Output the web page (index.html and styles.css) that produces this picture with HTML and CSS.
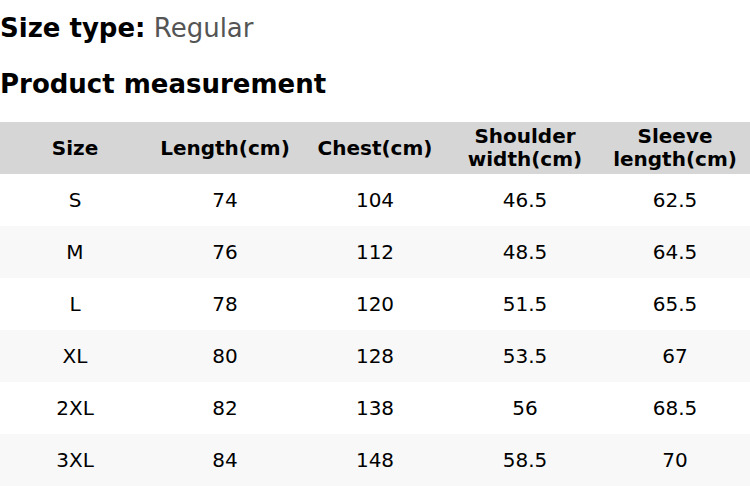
FILE: index.html
```html
<!DOCTYPE html>
<html>
<head>
<meta charset="utf-8">
<link rel="stylesheet" href="styles.css">
</head>
<body>
<div class="page">
  <p class="size-type"><span class="label">Size type:</span> <span class="value">Regular</span></p>
  <h2 class="section-title">Product measurement</h2>
  <table class="measure">
    <thead>
      <tr><th>Size</th><th>Length(cm)</th><th>Chest(cm)</th><th>Shoulder<br>width(cm)</th><th>Sleeve<br>length(cm)</th></tr>
    </thead>
    <tbody>
      <tr><td>S</td><td>74</td><td>104</td><td>46.5</td><td>62.5</td></tr>
      <tr><td>M</td><td>76</td><td>112</td><td>48.5</td><td>64.5</td></tr>
      <tr><td>L</td><td>78</td><td>120</td><td>51.5</td><td>65.5</td></tr>
      <tr><td>XL</td><td>80</td><td>128</td><td>53.5</td><td>67</td></tr>
      <tr><td>2XL</td><td>82</td><td>138</td><td>56</td><td>68.5</td></tr>
      <tr><td>3XL</td><td>84</td><td>148</td><td>58.5</td><td>70</td></tr>
    </tbody>
  </table>
</div>
</body>
</html>
```

FILE: styles.css
```css
html, body {
  margin: 0;
  padding: 0;
  background: #fff;
}
.page {
  font-family: "DejaVu Sans", sans-serif;
  color: #000;
  width: 750px;
}
.size-type {
  margin: 13px 0 0;
  font-size: 26px;
}
.size-type .label {
  font-weight: bold;
}
.size-type .value {
  color: #555;
}
.section-title {
  margin: 26px 0 0;
  font-size: 26px;
  font-weight: bold;
}
.measure {
  margin-top: 23px;
  width: 750px;
  border-collapse: collapse;
  table-layout: fixed;
  font-size: 20px;
}
.measure th, .measure td {
  width: 150px;
  height: 52px;
  padding: 0;
  text-align: center;
  vertical-align: middle;
}
.measure th {
  background: #d6d6d6;
  font-weight: bold;
  line-height: 23px;
}
.measure tbody tr:nth-child(even) {
  background: #f8f8f8;
}
```
